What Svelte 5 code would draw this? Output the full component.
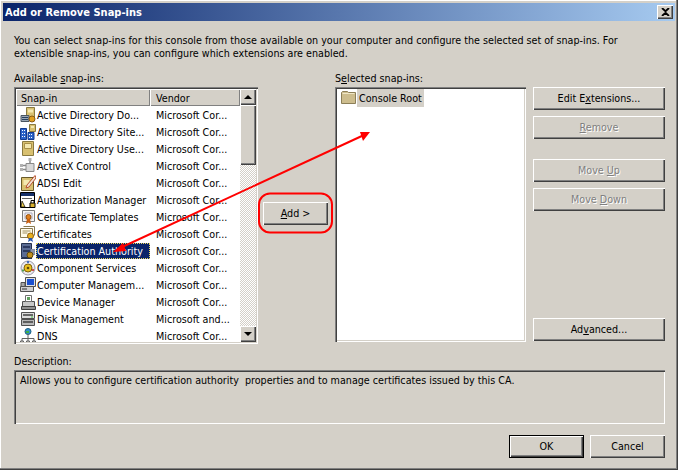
<script lang="ts">
    const ROWS = [
        { name: 'Active Directory Do...', vendor: 'Microsoft Cor...', icon: 'domains' },
        { name: 'Active Directory Site...', vendor: 'Microsoft Cor...', icon: 'sites' },
        { name: 'Active Directory Use...', vendor: 'Microsoft Cor...', icon: 'users' },
        { name: 'ActiveX Control', vendor: 'Microsoft Cor...', icon: 'activex' },
        { name: 'ADSI Edit', vendor: 'Microsoft Cor...', icon: 'adsi' },
        { name: 'Authorization Manager', vendor: 'Microsoft Cor...', icon: 'authz' },
        { name: 'Certificate Templates', vendor: 'Microsoft Cor...', icon: 'templates' },
        { name: 'Certificates', vendor: 'Microsoft Cor...', icon: 'certs' },
        { name: 'Certification Authority', vendor: 'Microsoft Cor...', icon: 'ca', selected: true },
        { name: 'Component Services', vendor: 'Microsoft Cor...', icon: 'component' },
        { name: 'Computer Managem...', vendor: 'Microsoft Cor...', icon: 'computer' },
        { name: 'Device Manager', vendor: 'Microsoft Cor...', icon: 'device' },
        { name: 'Disk Management', vendor: 'Microsoft and...', icon: 'disk' },
        { name: 'DNS', vendor: 'Microsoft Cor...', icon: 'dns' },
    ]

    const ICONS: Record<string, string> = {
        domains: '<path d="M6.500.5h8v10h-8z" fill="#d8c070" stroke="#8a7a40"/><path d="M8 2.500h5v3H8z" fill="#f4e8b0"/><path d="M1 8.500h8v6H1z" fill="#9aa6b4" stroke="#4a5560"/><path d="M2 10.500h6M2 12.500h6" stroke="#27405f"/><circle cx="12" cy="12" r="3" fill="#e0a020" stroke="#8a5a10"/>',
        sites: '<path d="M.5 4.500h6v11h-6zM8 8.500h6v7H8z" fill="#2a62c8" stroke="#123a90"/><path d="M2 6h1v1H2zm2 0h1v1H4zM2 9h1v1H2zm2 0h1v1H4zM2 12h1v1H2zm2 0h1v1H4zm5-2h1v1H9zm2 0h1v1h-1zm-2 3h1v1H9zm2 0h1v1h-1z" fill="#fff"/><path d="M9.500.5h6v7h-6z" fill="#d8c070" stroke="#8a7a40"/><path d="M11 2h3v2h-3z" fill="#f4e8b0"/>',
        users: '<path d="M2.500 .5h11v14h-11z" fill="#d8c070" stroke="#8a7a40"/><path d="M4.500 2.500h7v5h-7z" fill="#f4e8b0" stroke="#a89048"/>',
        activex: '<path d="M6 5.500h8v8H6z" fill="#d8d8d8" stroke="#8a8a8a"/><path d="M1 7.500h5M1 11.500h5M10 5V1" stroke="#8a8a8a" stroke-width="1.500"/><path d="M0 6h3v3H0zM0 10h3v3H0zM8.500 0h3v3h-3z" fill="#b0b0b0"/>',
        adsi: '<path d="M1.500 2.500h12v13h-12z" fill="#d8c070" stroke="#6a5a28"/><path d="M3.500 5h6v5h-6z" fill="#f4e8b0"/><path d="M15 .5 7 10l-1 3 3-1 7-9z" fill="#f0e0d0" stroke="#b85030"/>',
        authz: '<path d="M.5 .5h14v15H.5z" fill="#fff" stroke="#000"/><path d="M1 1h13v3H1z" fill="#16306a"/><path d="M2 6h10v1H2z" fill="#606060"/><path d="M2 9 5 15H1z" fill="#f0d050" stroke="#000" stroke-width=".7"/><path d="M10 11h5v4.500h-5z" fill="#d8b030" stroke="#000"/><path d="M11 11V8.500h3V11" fill="none" stroke="#000"/>',
        templates: '<path d="M2.500 1.500h12v11h-12z" fill="#f4f4f4" stroke="#7a7a7a"/><path d="M5 4h7v6H5z" fill="#fff" stroke="#a8a8c0"/><circle cx="8.500" cy="8" r="2.500" fill="#e08020" stroke="#905010"/><path d="M7 10l-1 5 2.500-1.500L11 15l-1-5" fill="#c86010"/>',
        certs: '<path d="M.5 2.500h12v9H.5z" fill="#fffbe8" stroke="#8a7a50"/><path d="M2.500 5h8M2.500 7h5" stroke="#a09060"/><path d="M3.500 .5h11v9" fill="none" stroke="#8a7a50"/><circle cx="10.500" cy="10" r="3" fill="#e8b020" stroke="#906010"/><path d="M9 12l-1 4 2.500-1.500L13 16l-1-4" fill="#2858b0"/>',
        ca: '<path d="M1.500 .5h10v14h-10z" fill="#5a6c94" stroke="#26324e"/><path d="M3 3h7v2H3zM3 7h7v2H3z" fill="#2c3a60"/><path d="M11 6h4v6h-4z" fill="#8a94a8"/><circle cx="10" cy="12" r="3" fill="#c09020" stroke="#604808"/><path d="M1 15.500h11" stroke="#26324e"/>',
        component: '<circle cx="8" cy="8" r="7" fill="#e8e8ee" stroke="#9a9aa8"/><circle cx="8" cy="8" r="4" fill="#e8c020" stroke="#806010"/><circle cx="8" cy="8" r="1.300" fill="#604808"/><path d="M2 9.500h2v2H2z" fill="#50a050"/><path d="M12 9h2v2h-2z" fill="#d05050"/><path d="M7 1h2v2H7z" fill="#4870c0"/>',
        computer: '<path d="M5.500 .5h10v9h-10z" fill="#e0e0e0" stroke="#505050"/><path d="M7 2h7v6H7z" fill="#1c50d0"/><path d="M.5 9.500h13v5H.5z" fill="#d0d0d0" stroke="#505050"/><path d="M1 5.500h4v4H1z" fill="#a8a8a8" stroke="#505050"/><path d="M2 12h5" stroke="#303030"/>',
        device: '<path d="M2.500 7.500h12v5h-12z" fill="#c8c8c8" stroke="#505050"/><path d="M5.500 1.500h6v6h-6z" fill="#fff" stroke="#707070"/><path d="M1.500 12.500h14v3h-14z" fill="#909090" stroke="#404040"/><path d="M7 3h3v3H7z" fill="#60a060"/>',
        disk: '<path d="M1.500 1.500h13v6h-13z" fill="#dcdcdc" stroke="#505050"/><path d="M3 4h10" stroke="#404040" stroke-width="1.500"/><path d="M1.500 8.500h13v6h-13z" fill="#b8b8b8" stroke="#505050"/><path d="M3 11h10" stroke="#404040" stroke-width="1.500"/><path d="M11 5.500h2v1h-2z" fill="#40c040"/>',
        dns: '<circle cx="8" cy="3.500" r="3" fill="#3090d0" stroke="#206080"/><path d="M6 3h3v2H6z" fill="#40b040"/><path d="M8 6v4M2 13V10.500h12V13M8 10v3" fill="none" stroke="#606060"/><path d="M0.500 13h3v2.500h-3zM6.500 13h3v2.500h-3zM12.500 13h3v2.500h-3z" fill="#c8c8c8" stroke="#606060"/>',
    }
</script>

<div class="dialog">
    <div class="titlebar">
        <span class="title">Add or Remove Snap-ins</span>
        <button class="close" aria-label="Close">
            <svg width="9" height="8" viewBox="0 0 9 8"><path d="M1 0 4.500 3.200 8 0M1 8 4.500 4.800 8 8" fill="none" stroke="#000" stroke-width="1.800"/></svg>
        </button>
    </div>

    <div class="content">
        <p class="intro">
            You can select snap-ins for this console from those available on your computer and configure the selected set of snap-ins. For<br>
            extensible snap-ins, you can configure which extensions are enabled.
        </p>

        <div class="labels">
            <span class="lbl-left">Available <u>s</u>nap-ins:</span>
            <span>S<u>e</u>lected snap-ins:</span>
        </div>

        <div class="panels">
            <div class="list sunken">
                <div class="rows">
                    <div class="header">
                        <span class="h-name">Snap-in</span>
                        <span class="h-vendor">Vendor</span>
                    </div>
                    {#each ROWS as row}
                        <div class="row">
                            <svg class="icon" width="16" height="16" viewBox="0 0 16 16">{@html ICONS[row.icon]}</svg>
                            <span class="name" class:selected={row.selected}>{row.name}</span>
                            <span class="vendor">{row.vendor}</span>
                        </div>
                    {/each}
                </div>
                <div class="scrollbar">
                    <div class="sb-btn"><i class="tri up"></i></div>
                    <div class="thumb"></div>
                    <div class="track"></div>
                    <div class="sb-btn"><i class="tri down"></i></div>
                </div>
            </div>

            <div class="middle">
                <button class="btn add"><u>A</u>dd &gt;</button>
            </div>

            <div class="selected-box sunken">
                <div class="root-row">
                    <svg width="15" height="15" viewBox="0 0 15 15">
                        <path d="M.5 13.500V2.500l1-1h5l1 1h7v11z" fill="#cdbd8e" stroke="#8c7f58"/>
                        <path d="M1.500 3.500h12" stroke="#efe6c6"/>
                    </svg>
                    <span class="root-name">Console Root</span>
                </div>
            </div>

            <div class="actions">
                <button class="btn">Edit E<u>x</u>tensions...</button>
                <button class="btn off" disabled><u>R</u>emove</button>
                <button class="btn off gap" disabled>Move <u>U</u>p</button>
                <button class="btn off" disabled>Move <u>D</u>own</button>
                <button class="btn bottom">Ad<u>v</u>anced...</button>
            </div>
        </div>

        <div class="desc-label">Description:</div>
        <div class="desc">Allows you to configure certification authority&nbsp; properties and to manage certificates issued by this CA.</div>

        <div class="footer">
            <button class="btn ok">OK</button>
            <button class="btn cancel">Cancel</button>
        </div>
    </div>

    <svg class="notes" width="678" height="470" viewBox="0 0 678 470">
        <rect x="259" y="193.500" width="73" height="39" rx="11" fill="none" stroke="#f00" stroke-width="2"/>
        <path d="M120 248 364 135" stroke="#f00" stroke-width="2"/>
        <path d="M370 132 360 132 363 141z" fill="#f00"/>
        <path d="M113 252 123 243 126 251z" fill="#f00"/>
    </svg>
</div>

<style>
    :global(body) { margin: 0; background: #d4d0c8; }
    .dialog {
        position: relative;
        width: 678px;
        height: 470px;
        box-sizing: border-box;
        padding: 3px 3px 0;
        background: #d4d0c8;
        overflow: hidden;
        font-family: "DejaVu Sans Condensed", "DejaVu Sans", sans-serif;
        font-stretch: condensed;
        font-size: 10.67px;
        line-height: 13px;
        color: #000;
        box-shadow: inset -1px -1px 0 #404040, inset -2px -2px 0 #808080, inset 1px 1px 0 #fff;
    }
    .titlebar {
        height: 18px;
        display: flex;
        align-items: center;
        justify-content: space-between;
        padding: 0 2px;
        background: linear-gradient(90deg, #0a246a, #a6caf0);
    }
    .title { color: #fff; font-weight: 700; font-size: 11px; }
    .close {
        width: 16px;
        height: 14px;
        padding: 0;
        border: 0;
        display: flex;
        align-items: center;
        justify-content: center;
        background: #d4d0c8;
        box-shadow: inset 1px 1px 0 #fff, inset -1px -1px 0 #404040, inset -2px -2px 0 #808080;
    }
    .content { padding: 13px 0 0 11px; }
    .intro { margin: 0; white-space: nowrap; }
    .labels { display: flex; margin-top: 12px; height: 15px; }
    .lbl-left { width: 321px; }
    .panels { display: flex; height: 257px; }
    .sunken {
        box-sizing: border-box;
        background: #fff;
        padding: 2px;
        box-shadow: inset 1px 1px 0 #808080, inset 2px 2px 0 #404040, inset -1px -1px 0 #fff, inset -2px -2px 0 #d4d0c8;
    }
    .list { width: 244px; display: flex; overflow: hidden; }
    .rows { flex: 1; min-width: 0; overflow: hidden; }
    .header { display: flex; height: 17px; background: #d4d0c8; }
    .header span {
        box-sizing: border-box;
        padding: 3px 0 0 5px;
        box-shadow: inset 1px 1px 0 #fff, inset -1px -1px 0 #808080;
    }
    .h-name { width: 134px; }
    .h-vendor { flex: 1; padding-left: 6px !important; }
    .row { display: flex; align-items: center; height: 17px; padding-left: 4px; white-space: nowrap; }
    .icon { flex: none; width: 16px; height: 16px; }
    .name { width: 114px; margin-right: 6px; padding: 2px 0 1px 1px; box-sizing: border-box; flex: none; }
    .vendor { padding-top: 1px; }
    .name.selected { background: #0a246a; color: #fff; outline: 1px dotted #e8d860; outline-offset: -1px; }
    .scrollbar { width: 16px; flex: none; display: flex; flex-direction: column; }
    .sb-btn, .thumb {
        background: #d4d0c8;
        box-sizing: border-box;
        box-shadow: inset 1px 1px 0 #fff, inset -1px -1px 0 #404040, inset -2px -2px 0 #808080;
    }
    .sb-btn { height: 16px; flex: none; display: flex; align-items: center; justify-content: center; }
    .thumb { height: 60px; flex: none; }
    .track {
        flex: 1;
        background-image: conic-gradient(#fff 25%, #d4d0c8 0 50%, #fff 0 75%, #d4d0c8 0);
        background-size: 2px 2px;
    }
    .tri { width: 0; height: 0; border-left: 4px solid transparent; border-right: 4px solid transparent; }
    .tri.up { border-bottom: 4px solid #000; }
    .tri.down { border-top: 4px solid #000; }
    .middle { width: 77px; display: flex; align-items: center; justify-content: center; padding: 0 2px 5px 0; box-sizing: border-box; }
    .selected-box { width: 191px; height: 255px; padding: 2px 0 0 6px; }
    .root-row { display: flex; align-items: center; height: 17px; }
    .root-name { background: #d4d0c8; padding: 3px 2px 2px; margin-left: 1px; }
    .actions { width: 132px; height: 254px; margin-left: 7px; display: flex; flex-direction: column; gap: 6px; }
    .btn {
        box-sizing: border-box;
        height: 23px;
        padding: 0;
        border: 0;
        font: inherit;
        color: #000;
        background: #d4d0c8;
        box-shadow: inset 1px 1px 0 #fff, inset -1px -1px 0 #404040, inset -2px -2px 0 #808080;
    }
    .btn.add { width: 65px; }
    .btn.off { color: #808080; text-shadow: 1px 1px 0 #fff; }
    .btn.gap { margin-top: 14px; }
    .btn.bottom { margin-top: auto; }
    .desc-label { margin-top: 11px; height: 15px; }
    .desc {
        box-sizing: border-box;
        width: 651px;
        height: 54px;
        padding: 4px 6px;
        box-shadow: inset 1px 1px 0 #808080, inset 2px 2px 0 #404040, inset -1px -1px 0 #fff;
    }
    .footer { display: flex; gap: 6px; margin: 11px 0 0 495px; }
    .ok, .cancel { width: 75px; }
    .btn.ok { box-shadow: inset 0 0 0 1px #000, inset 2px 2px 0 #fff, inset -2px -2px 0 #404040, inset -3px -3px 0 #808080; }
    .notes { position: absolute; left: 0; top: 0; pointer-events: none; }
</style>
